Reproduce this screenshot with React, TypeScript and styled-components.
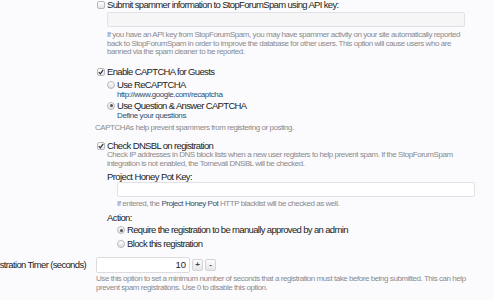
import React from 'react';
import styled, { createGlobalStyle } from 'styled-components';

const GlobalStyle = createGlobalStyle`
  html, body {
    margin: 0;
    padding: 0;
    background: #fbfbfd;
  }
  body {
    font-family: "Liberation Sans", Arial, sans-serif;
    color: #222;
  }
`;

const Page = styled.div`
  width: 494px;
  height: 300px;
  overflow: hidden;
`;

const OptionRow = styled.div<{ $top?: number }>`
  display: grid;
  grid-template-columns: 88px 370px;
  column-gap: 8px;
  margin-top: ${p => p.$top ?? 0}px;
`;

const RowLabel = styled.div`
  display: flex;
  justify-content: flex-end;
  padding-right: 2px;
  font-size: 9.5px;
  letter-spacing: -0.65px;
  line-height: 16px;
  white-space: nowrap;
  color: #222;
`;

const RowBody = styled.div`
  min-width: 0;
`;

const Line = styled.div<{ $indent?: number; $top?: number }>`
  display: flex;
  align-items: center;
  gap: 2px;
  margin-left: ${p => p.$indent ?? 0}px;
  margin-top: ${p => p.$top ?? 0}px;
  font-size: 9.5px;
  letter-spacing: -0.65px;
  line-height: 10px;
  white-space: nowrap;
`;

const Box = styled.span`
  width: 8px;
  height: 8px;
  margin-left: 1px;
  box-sizing: border-box;
  border: 1px solid #b9b9bd;
  border-radius: 2px;
  background: linear-gradient(#ffffff, #e4e4e8);
  display: inline-flex;
  align-items: center;
  justify-content: center;
  flex: none;
`;

const Radio = styled.span<{ $on?: boolean }>`
  width: 8px;
  height: 8px;
  box-sizing: border-box;
  border: 1px solid #b9b9bd;
  border-radius: 50%;
  background: linear-gradient(#ffffff, #dedee3);
  display: inline-flex;
  align-items: center;
  justify-content: center;
  flex: none;
  &::after {
    content: '';
    display: ${p => (p.$on ? 'block' : 'none')};
    width: 3px;
    height: 3px;
    border-radius: 50%;
    background: #555;
  }
`;

const Block = styled.div<{ $indent?: number; $top?: number }>`
  margin-left: ${p => p.$indent ?? 0}px;
  margin-top: ${p => p.$top ?? 0}px;
`;

const TextInput = styled.div<{ $top?: number; $muted?: boolean }>`
  width: 358px;
  height: 15px;
  box-sizing: border-box;
  margin-top: ${p => p.$top ?? 0}px;
  border: 1px solid #e2e2e6;
  border-radius: 2px;
  background: ${p => (p.$muted ? '#f6f6f7' : '#ffffff')};
`;

const Hint = styled.div<{ $top?: number; $indent?: number }>`
  margin-top: ${p => p.$top ?? 0}px;
  margin-left: ${p => p.$indent ?? 0}px;
  font-size: 8px;
  letter-spacing: -0.45px;
  line-height: 8.5px;
  color: #8a8a8e;
`;

const SmallLink = styled.a<{ $indent?: number }>`
  display: block;
  margin-left: ${p => p.$indent ?? 0}px;
  font-size: 8px;
  letter-spacing: -0.4px;
  line-height: 10px;
  color: #2e4d6e;
  text-decoration: none;
`;

const InlineLink = styled.a`
  color: #2e4d6e;
  text-decoration: none;
`;

const FieldLabel = styled.div<{ $top?: number }>`
  margin-top: ${p => p.$top ?? 0}px;
  margin-left: 11px;
  font-size: 9.5px;
  letter-spacing: -0.6px;
  line-height: 10px;
`;

const SpinRow = styled.div`
  display: flex;
  align-items: center;
  gap: 2px;
`;

const NumberInput = styled.div`
  width: 94px;
  height: 16px;
  box-sizing: border-box;
  border: 1px solid #dcdce0;
  border-radius: 2px;
  background: #fff;
  font-size: 9.5px;
  line-height: 14px;
  text-align: right;
  padding-right: 3px;
`;

const SpinButton = styled.span`
  width: 11px;
  height: 12px;
  box-sizing: border-box;
  border: 1px solid #d4d4d8;
  border-radius: 2px;
  background: linear-gradient(#fbfbfc, #e6e6ea);
  font-size: 8px;
  font-weight: bold;
  line-height: 10px;
  text-align: center;
  color: #444;
`;

const CheckMark = () => (
  <svg width="6" height="6" viewBox="0 0 6 6">
    <path d="M0.8 3.2 L2.4 4.8 L5.2 0.9" fill="none" stroke="#333" strokeWidth="1.2" />
  </svg>
);

const App: React.FC = () => (
  <Page>
    <GlobalStyle />
    <OptionRow>
      <RowLabel />
      <RowBody>
        <Line>
          <Box />
          <span>Submit spammer information to StopForumSpam using API key:</span>
        </Line>
        <Block $indent={11}>
          <TextInput $top={2} $muted />
          <Hint $top={4}>
            If you have an API key from StopForumSpam, you may have spammer activity on your site automatically reported
            back to StopForumSpam in order to improve the database for other users. This option will cause users who are
            banned via the spam cleaner to be reported.
          </Hint>
        </Block>
      </RowBody>
    </OptionRow>

    <OptionRow $top={10}>
      <RowLabel />
      <RowBody>
        <Line>
          <Box>
            <CheckMark />
          </Box>
          <span>Enable CAPTCHA for Guests</span>
        </Line>
        <Line $indent={11} $top={3}>
          <Radio />
          <span>Use ReCAPTCHA</span>
        </Line>
        <SmallLink $indent={21}>http://www.google.com/recaptcha</SmallLink>
        <Line $indent={11} $top={1}>
          <Radio $on />
          <span>Use Question &amp; Answer CAPTCHA</span>
        </Line>
        <SmallLink $indent={21}>Define your questions</SmallLink>
        <Hint $top={3} $indent={-1}>
          CAPTCHAs help prevent spammers from registering or posting.
        </Hint>
      </RowBody>
    </OptionRow>

    <OptionRow $top={9}>
      <RowLabel />
      <RowBody>
        <Line>
          <Box>
            <CheckMark />
          </Box>
          <span>Check DNSBL on registration</span>
        </Line>
        <Hint $indent={11} $top={0}>
          Check IP addresses in DNS block lists when a new user registers to help prevent spam. If the StopForumSpam
          integration is not enabled, the Tornevall DNSBL will be checked.
        </Hint>
        <FieldLabel $top={4}>Project Honey Pot Key:</FieldLabel>
        <Block $indent={21}>
          <TextInput />
          <Hint $top={2.5}>
            If entered, the <InlineLink>Project Honey Pot</InlineLink> HTTP blacklist will be checked as well.
          </Hint>
        </Block>
        <FieldLabel $top={5}>Action:</FieldLabel>
        <Line $indent={21} $top={2}>
          <Radio $on />
          <span>Require the registration to be manually approved by an admin</span>
        </Line>
        <Line $indent={21} $top={4}>
          <Radio />
          <span>Block this registration</span>
        </Line>
      </RowBody>
    </OptionRow>

    <OptionRow $top={8}>
      <RowLabel>Registration Timer (seconds)</RowLabel>
      <RowBody>
        <SpinRow>
          <NumberInput>10</NumberInput>
          <SpinButton>+</SpinButton>
          <SpinButton>-</SpinButton>
        </SpinRow>
        <Hint $top={2}>
          Use this option to set a minimum number of seconds that a registration must take before being submitted. This can
          help prevent spam registrations. Use 0 to disable this option.
        </Hint>
      </RowBody>
    </OptionRow>
  </Page>
);

export default App;
